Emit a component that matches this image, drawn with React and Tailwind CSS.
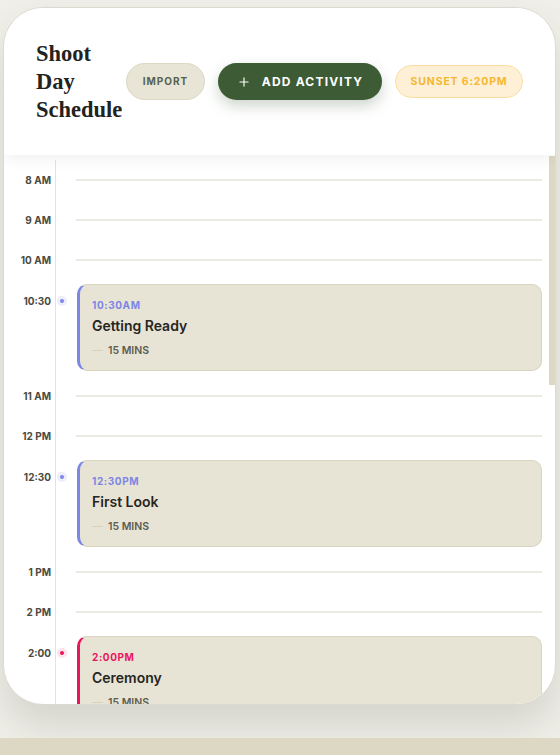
import { Plus } from 'lucide-react';

const rows = [
  { type: 'hour', label: '8 AM' },
  { type: 'hour', label: '9 AM' },
  { type: 'hour', label: '10 AM' },
  { type: 'event', label: '10:30', time: '10:30AM', title: 'Getting Ready', dur: '15 MINS', tone: 'indigo' },
  { type: 'hour', label: '11 AM' },
  { type: 'hour', label: '12 PM' },
  { type: 'event', label: '12:30', time: '12:30PM', title: 'First Look', dur: '15 MINS', tone: 'indigo' },
  { type: 'hour', label: '1 PM' },
  { type: 'hour', label: '2 PM' },
  { type: 'event', label: '2:00', time: '2:00PM', title: 'Ceremony', dur: '15 MINS', tone: 'pink' },
  { type: 'hour', label: '3 PM' },
  { type: 'hour', label: '4 PM' },
  { type: 'event', label: '4:30', time: '4:30PM', title: 'Family Photos', dur: '30 MINS', tone: 'indigo' },
  { type: 'hour', label: '5 PM' },
  { type: 'hour', label: '6 PM' },
  { type: 'event', label: '6:30', time: '6:30PM', title: 'Reception', dur: '60 MINS', tone: 'pink' },
  { type: 'hour', label: '7 PM' },
  { type: 'hour', label: '8 PM' },
  { type: 'hour', label: '9 PM' },
  { type: 'hour', label: '10 PM' },
];

const tones = {
  indigo: { border: 'border-l-[#7c86e4]', text: 'text-[#7c86e4]', dot: 'bg-[#7c86e4]', halo: 'bg-[#eceefc]' },
  pink: { border: 'border-l-[#e8175d]', text: 'text-[#e8175d]', dot: 'bg-[#e8175d]', halo: 'bg-[#fde3ec]' },
};

function HourRow({ label }) {
  return (
    <div className="flex h-[40px]">
      <div className="w-[47px] flex items-center justify-end text-[10px] font-bold text-[#4a4a3e]">{label}</div>
      <div className="ml-[4px] flex-1 border-l border-[#e6e4da] flex items-center pl-[20px]">
        <div className="h-[2px] w-full bg-[#ebeae4]"></div>
      </div>
    </div>
  );
}

function EventRow({ label, time, title, dur, tone }) {
  const t = tones[tone];
  return (
    <div className="flex">
      <div className="w-[47px] pt-[15px] text-right text-[10px] font-bold leading-[13px] text-[#4a4a3e]">{label}</div>
      <div className="ml-[4px] flex-1 border-l border-[#e6e4da] flex">
        <div className="w-[21px] pt-[16px] pl-[1px] flex">
          <div className={`w-[10px] h-[10px] rounded-full ${t.halo} flex items-center justify-center`}>
            <div className={`w-[4px] h-[4px] rounded-full ${t.dot}`}></div>
          </div>
        </div>
        <div className={`flex-1 mt-[4px] mb-[5px] h-[87px] rounded-[10px] border border-[#d9d4be] border-l-[3px] ${t.border} bg-[#e8e4d5] pl-[12px] pt-[14px]`}>
          <div className={`text-[10px] font-bold tracking-[0.06em] leading-[13px] ${t.text}`}>{time}</div>
          <div className="mt-[5px] text-[14px] font-semibold leading-[18px] text-[#26261f]">{title}</div>
          <div className="mt-[9px] flex items-center gap-[5px]">
            <div className="w-[11px] h-[1px] bg-[#d8d3c0]"></div>
            <div className="text-[10.5px] font-semibold leading-[13px] text-[#5c5c50]">{dur}</div>
          </div>
        </div>
      </div>
    </div>
  );
}

export default function App() {
  return (
    <div className="h-[755px] overflow-hidden bg-[#f0efe9] flex flex-col" style={{ fontFamily: 'Inter, "Liberation Sans", sans-serif' }}>
      <div className="mt-[7px] ml-[3px] mr-[4px] h-[698px] shrink-0 rounded-[40px] border border-[#dcdad0] bg-white overflow-hidden flex flex-col shadow-[0_22px_40px_rgba(60,55,30,0.14)]">
        {/* Header */}
        <header className="relative z-10 h-[147px] shrink-0 bg-white flex items-center pl-[32px] shadow-[0_4px_14px_rgba(0,0,0,0.06)]">
          <h1 className="w-[90px] shrink-0 text-[22.5px] font-bold leading-[28px] text-[#23231d]" style={{ fontFamily: '"Liberation Serif", "DejaVu Serif", serif' }}>
            Shoot Day Schedule
          </h1>
          <div className="flex items-center gap-[13px]">
            <button className="h-[37px] w-[79px] rounded-full border border-[#dcd8c4] bg-[#e8e5d7] text-[10px] font-bold tracking-[0.1em] text-[#56624c]">
              IMPORT
            </button>
            <button className="h-[37px] w-[164px] rounded-full bg-[#3d5b35] text-white flex items-center justify-center gap-[11px] shadow-[0_6px_14px_rgba(61,91,53,0.25)]">
              <Plus className="w-[14px] h-[14px]" strokeWidth={2} />
              <span className="text-[12px] font-bold tracking-[0.1em]">ADD ACTIVITY</span>
            </button>
            <div className="h-[33px] w-[128px] rounded-full border border-[#fbdca0] bg-[#fdf0d6] flex items-center justify-center text-[10.5px] font-bold tracking-[0.08em] text-[#f5b731]">
              SUNSET 6:20PM
            </div>
          </div>
        </header>

        {/* Timeline */}
        <div className="relative flex-1 min-h-0">
          <div className="h-full overflow-y-auto pt-[5px] pb-[20px] pr-[13px] [scrollbar-width:none]">
            {rows.map((r, i) =>
              r.type === 'hour' ? <HourRow key={i} label={r.label} /> : <EventRow key={i} {...r} />
            )}
          </div>
          {/* scrollbar thumb */}
          <div className="absolute right-0 top-[1px] w-[6px] h-[229px] bg-[#dcd8c3]"></div>
        </div>
      </div>
      <div className="mt-[33px] h-[17px] shrink-0 bg-[#dcd8c4]"></div>
    </div>
  );
}
